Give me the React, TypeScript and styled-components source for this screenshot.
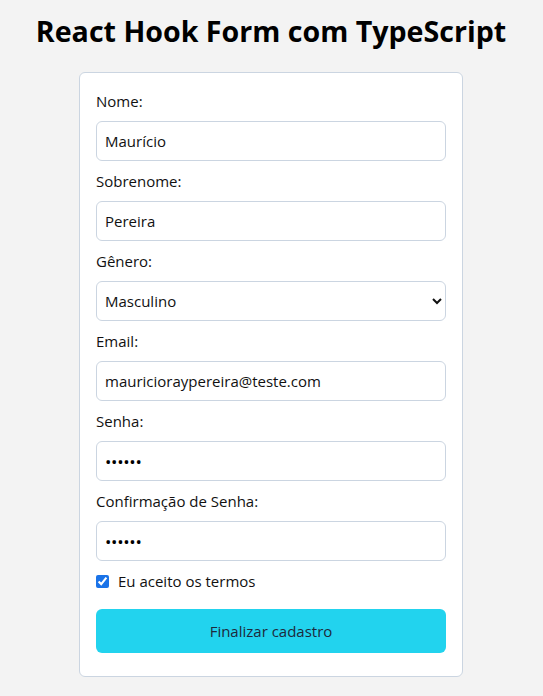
import React from "react";
import styled, { createGlobalStyle } from "styled-components";

const Global = createGlobalStyle`
  * { box-sizing: border-box; }
  body {
    margin: 0;
    background: #f3f3f3;
    font-family: "Open Sans", "Noto Sans", sans-serif;
    color: #111;
  }
`;

const Page = styled.div`
  display: flex;
  flex-direction: column;
  align-items: center;
  padding: 12px 1px 19px 0;
`;

const Title = styled.h1`
  margin: 0 0 22px;
  font-size: 28.6px;
  line-height: 38px;
  font-weight: 700;
  color: #000;
`;

const Card = styled.form`
  width: 384px;
  background: #fff;
  border: 1px solid #cbd5e1;
  border-radius: 6px;
  padding: 16px 16px 23px;
  display: flex;
  flex-direction: column;
  gap: 8px;
`;

const Label = styled.label`
  font-size: 15px;
  line-height: 24px;
  color: #111;
`;

const fieldCss = `
  width: 100%;
  height: 40px;
  border: 1px solid #cbd5e1;
  border-radius: 6px;
  padding: 0 8px;
  font-family: "Open Sans", "Noto Sans", sans-serif;
  font-size: 15px;
  color: #111;
  background: #fff;
  outline: none;
`;

const Input = styled.input<{ $secret?: boolean }>`
  ${fieldCss}
  ${(p) => (p.$secret ? "font-size: 17px; letter-spacing: -0.3px; color: #000;" : "")}
`;

const Select = styled.select`
  ${fieldCss}
  padding: 0 4px;
`;

const CheckRow = styled.label`
  display: flex;
  align-items: center;
  gap: 9px;
  font-size: 15px;
  line-height: 24px;
  color: #111;
`;

const Check = styled.input`
  width: 13px;
  height: 13px;
  margin: 0;
  accent-color: #1a73e8;
`;

const Button = styled.button`
  margin-top: 8px;
  height: 44px;
  border: none;
  border-radius: 6px;
  background: #22d3ee;
  color: #1e293b;
  font-family: "Open Sans", "Noto Sans", sans-serif;
  font-size: 15px;
  cursor: pointer;
`;

export default function App() {
  return (
    <>
      <Global />
      <Page>
        <Title>React Hook Form com TypeScript</Title>
        <Card onSubmit={(e) => e.preventDefault()}>
          <Label>Nome:</Label>
          <Input defaultValue="Maurício" />
          <Label>Sobrenome:</Label>
          <Input defaultValue="Pereira" />
          <Label>Gênero:</Label>
          <Select defaultValue="m">
            <option value="m">Masculino</option>
            <option value="f">Feminino</option>
          </Select>
          <Label>Email:</Label>
          <Input type="email" defaultValue="mauricioraypereira@teste.com" />
          <Label>Senha:</Label>
          <Input $secret type="password" defaultValue="123456" />
          <Label>Confirmação de Senha:</Label>
          <Input $secret type="password" defaultValue="123456" />
          <CheckRow>
            <Check type="checkbox" defaultChecked />
            Eu aceito os termos
          </CheckRow>
          <Button type="submit">Finalizar cadastro</Button>
        </Card>
      </Page>
    </>
  );
}
